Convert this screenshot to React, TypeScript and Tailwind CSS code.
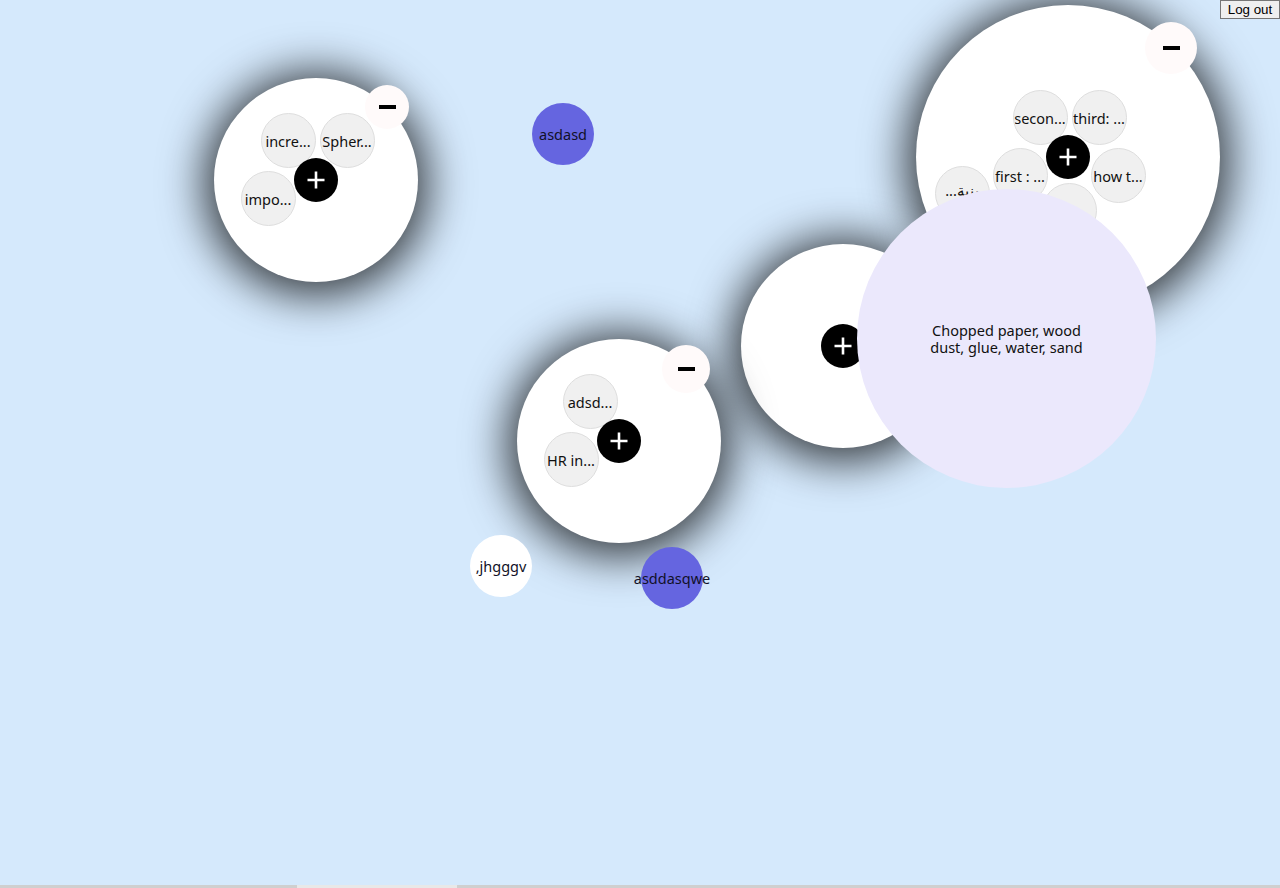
import React from "react";

type Item = { label: string; x: number; y: number; rtl?: boolean };

type BubbleProps = {
  cx: number;
  cy: number;
  r: number;
  items: Item[];
  minus?: { x: number; y: number; r: number };
};

const FONT = "[font-family:'Noto_Sans','Open_Sans',sans-serif]";

function PlusButton() {
  return (
    <div className="absolute left-1/2 top-1/2 z-20 flex h-[44px] w-[44px] -translate-x-1/2 -translate-y-1/2 items-center justify-center rounded-full bg-black">
      <svg width="20" height="20" viewBox="0 0 20 20">
        <path d="M10 1.5v17M1.5 10h17" stroke="white" strokeWidth="2.6" />
      </svg>
    </div>
  );
}

// big node on the canvas: children sit around the "+" in the middle
function Bubble({ cx, cy, r, items, minus }: BubbleProps) {
  return (
    <div
      className="absolute z-0 rounded-full bg-white shadow-[0_4px_44px_10px_rgba(0,0,0,0.75)]"
      style={{ left: cx - r, top: cy - r, width: r * 2, height: r * 2 }}
    >
      {items.map((item) => (
        <div
          key={item.label + item.x}
          className={`absolute z-10 flex h-[55px] w-[55px] items-center justify-center overflow-hidden rounded-full border border-[#dedede] bg-[#f0f0f0] text-[14.5px] text-[#111] ${
            item.rtl ? "pb-[4px]" : "pt-[4px]"
          } ${FONT}`}
          style={{ left: r + item.x - 27.5, top: r + item.y - 27.5 }}
          dir={item.rtl ? "rtl" : undefined}
        >
          <span className="whitespace-nowrap">{item.label}</span>
        </div>
      ))}
      <PlusButton />
      {minus && (
        <div
          className="absolute z-30 flex items-center justify-center rounded-full bg-[#fffafa]"
          style={{
            left: r + minus.x - minus.r,
            top: r + minus.y - minus.r,
            width: minus.r * 2,
            height: minus.r * 2,
          }}
        >
          <div className="h-[4px] w-[17px] bg-black" />
        </div>
      )}
    </div>
  );
}

function Dot({
  cx,
  cy,
  label,
  color,
}: {
  cx: number;
  cy: number;
  label: string;
  color: string;
}) {
  return (
    <div
      className={`absolute flex h-[62px] w-[62px] items-center justify-center rounded-full pt-[2px] ${color} text-[14.5px] text-[#111128] ${FONT}`}
      style={{ left: cx - 31, top: cy - 31 }}
    >
      <span className="whitespace-nowrap">{label}</span>
    </div>
  );
}

export default function App() {
  return (
    <div className="flex h-[888px] w-full flex-col overflow-hidden bg-[#d5e9fc]">
      <div className="relative flex-1">
        <Bubble
          cx={316}
          cy={180}
          r={102}
          items={[
            { label: "incre...", x: -28, y: -40 },
            { label: "Spher...", x: 31, y: -40 },
            { label: "impo...", x: -48, y: 18 },
          ]}
          minus={{ x: 71, y: -73, r: 22 }}
        />

        <Dot cx={563} cy={134} label="asdasd" color="bg-[#6565e0]" />

        <Bubble
          cx={1068}
          cy={157}
          r={152}
          items={[
            { label: "secon...", x: -28, y: -40 },
            { label: "third: ...", x: 31, y: -40 },
            { label: "first : ...", x: -48, y: 18 },
            { label: "how t...", x: 50, y: 18 },
            { label: "بنية...", x: -106, y: 36, rtl: true },
            { label: "...تخ", x: 1, y: 53, rtl: true },
          ]}
          minus={{ x: 103, y: -109, r: 26 }}
        />

        <Bubble cx={843} cy={346} r={102} items={[]} />

        <div
          className={`absolute z-0 flex items-center justify-center rounded-full bg-[#ebe8fc] text-center text-[14.5px] leading-[17px] text-[#111] ${FONT}`}
          style={{ left: 857, top: 189, width: 299, height: 299 }}
        >
          <span className="w-[170px]">
            Chopped paper, wood dust, glue, water, sand
          </span>
        </div>

        <Bubble
          cx={619}
          cy={441}
          r={102}
          items={[
            { label: "adsd...", x: -29, y: -40 },
            { label: "HR in...", x: -48, y: 18 },
          ]}
          minus={{ x: 67, y: -72, r: 24 }}
        />

        <Dot cx={501} cy={566} label=",jhgggv" color="bg-white" />
        <Dot cx={672} cy={578} label="asddasqwe" color="bg-[#6565e0]" />

        <button
          type="button"
          className="absolute right-0 top-0 z-40 h-[19px] w-[60px] border border-[#767676] bg-[#efefef] text-[13.33px] leading-[15px] text-black [font-family:'Liberation_Sans',Arial,sans-serif]"
        >
          Log out
        </button>
      </div>

      <div className="flex h-[3px] bg-[#cfcfcf]">
        <div className="w-[297px]" />
        <div className="w-[160px] bg-[#e8e8e8]" />
      </div>
    </div>
  );
}
